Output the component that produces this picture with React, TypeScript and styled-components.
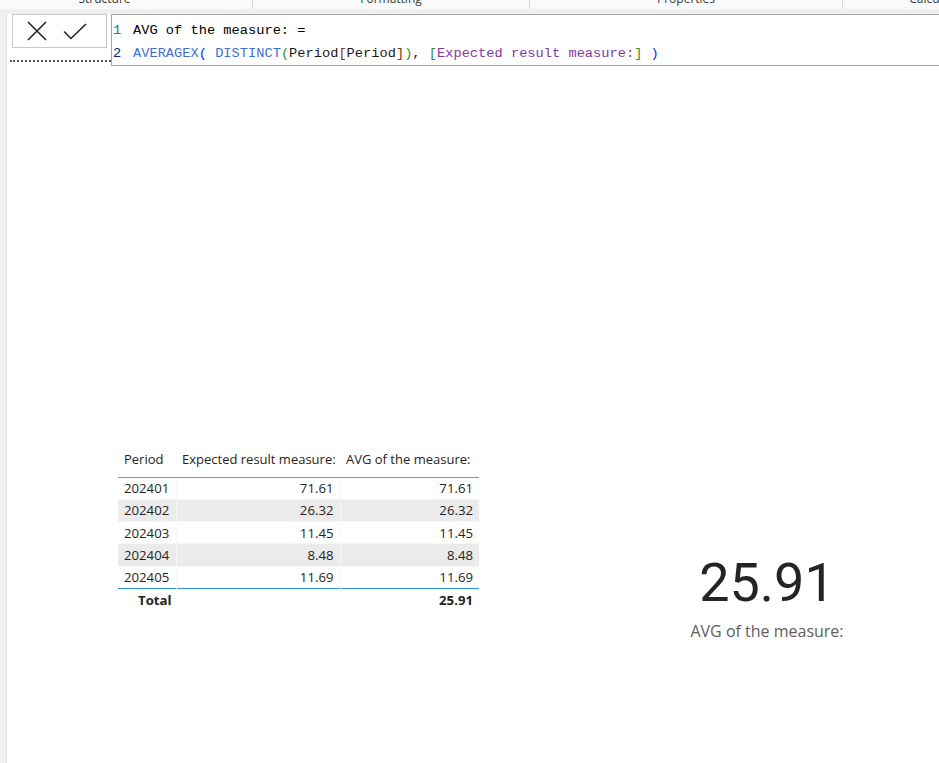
import styled, { createGlobalStyle } from "styled-components";

const GlobalStyle = createGlobalStyle`
  html, body {
    margin: 0;
    padding: 0;
    background: #ffffff;
  }
  body {
    font-family: "Open Sans", "Liberation Sans", sans-serif;
    color: #252423;
  }
`;

const Page = styled.div`
  width: 939px;
  height: 763px;
  overflow: hidden;
  display: flex;
  flex-direction: column;
  background: #ffffff;
`;

const TabBar = styled.div`
  height: 9px;
  background: #fafafa;
  display: flex;
  overflow: hidden;
  margin-left: -43px;
`;

const Tab = styled.div<{ $w: number; $last?: boolean }>`
  width: ${(p) => p.$w}px;
  flex: none;
  height: 9px;
  display: flex;
  justify-content: center;
  border-right: ${(p) => (p.$last ? "none" : "1px solid #d6d6d6")};
  box-sizing: border-box;
`;

const TabLabel = styled.span`
  font-size: 12px;
  line-height: 16px;
  margin-top: -9px;
  color: #3b3a39;
  white-space: nowrap;
`;

const Band = styled.div`
  height: 5px;
  background: #f0f0f0;
`;

const Body = styled.div`
  flex: 1;
  display: flex;
  min-height: 0;
`;

const LeftStrip = styled.div`
  width: 6px;
  flex: none;
  background: #f0f0f0;
  border-right: 1px solid #e4e4e4;
`;

const Main = styled.div`
  flex: 1;
  display: flex;
  flex-direction: column;
  min-width: 0;
`;

const FormulaRow = styled.div`
  display: flex;
  height: 52px;
`;

const Commit = styled.div`
  width: 104px;
  flex: none;
  display: flex;
  flex-direction: column;
`;

const ButtonBox = styled.div`
  margin-left: 5px;
  width: 95px;
  height: 34px;
  box-sizing: border-box;
  border: 1px solid #c8c8c8;
  display: flex;
  align-items: center;
  padding-left: 14px;
  gap: 16px;
`;

const Dotted = styled.div`
  margin-top: 12px;
  margin-left: 3px;
  height: 0;
  border-bottom: 2px dotted #555555;
`;

const FormulaBox = styled.div`
  flex: 1;
  box-sizing: border-box;
  border: 1px solid #a6a6a6;
  border-right: none;
  height: 52px;
  padding-top: 4px;
  font-family: "Liberation Mono", "DejaVu Sans Mono", monospace;
  font-size: 13.7px;
  white-space: pre;
  overflow: hidden;
`;

const CodeLine = styled.div`
  height: 23px;
  line-height: 23px;
  display: flex;
`;

const LineNo = styled.span<{ $active?: boolean }>`
  width: 20px;
  padding-left: 1px;
  flex: none;
  color: ${(p) => (p.$active ? "#0b216f" : "#237893")};
`;

const Tok = styled.span<{ $c: string }>`
  color: ${(p) => p.$c};
`;

const Canvas = styled.div`
  flex: 1;
  display: flex;
  align-items: flex-start;
  padding-top: 382px;
  padding-left: 111px;
`;

const TableVisual = styled.table`
  border-collapse: collapse;
  table-layout: fixed;
  width: 361px;
  font-size: 13.2px;
  color: #252423;
  flex: none;
`;

const HeadCell = styled.th<{ $w: number }>`
  width: ${(p) => p.$w}px;
  box-sizing: border-box;
  height: 29px;
  font-weight: 400;
  font-size: 13px;
  text-align: left;
  padding: 0 4px 6px 6px;
  white-space: nowrap;
  overflow: visible;
  border-bottom: 1px solid #4aa3e6;
`;

const Row = styled.tr<{ $alt?: boolean }>`
  background: ${(p) => (p.$alt ? "#ebebeb" : "#ffffff")};
`;

const Cell = styled.td<{ $num?: boolean; $last?: boolean }>`
  height: 22.3px;
  box-sizing: border-box;
  padding: 0 6px 0 6px;
  text-align: ${(p) => (p.$num ? "right" : "left")};
  border-bottom: ${(p) => (p.$last ? "none" : "1px solid #f7f7f7")};
  border-left: 1px solid #f7f7f7;
  &:first-child {
    border-left: none;
  }
`;

const TotalCell = styled.td<{ $num?: boolean }>`
  height: 23px;
  font-weight: 700;
  padding: 0 6px 0 ${(p) => (p.$num ? 6 : 20)}px;
  text-align: ${(p) => (p.$num ? "right" : "left")};
  border-top: 1px solid #2b98ef;
`;

const CardVisual = styled.div`
  margin-left: 188px;
  margin-top: 104px;
  width: 200px;
  display: flex;
  flex-direction: column;
  align-items: center;
`;

const BigValue = styled.div`
  font-family: Roboto, "Liberation Sans", sans-serif;
  font-size: 54px;
  line-height: 62px;
  color: #252423;
`;

const CardLabel = styled.div`
  margin-top: 6px;
  font-size: 16px;
  color: #605e5c;
  white-space: nowrap;
`;

const rows = [
  ["202401", "71.61", "71.61"],
  ["202402", "26.32", "26.32"],
  ["202403", "11.45", "11.45"],
  ["202404", "8.48", "8.48"],
  ["202405", "11.69", "11.69"],
];

const FN = "#3f6fd6";
const B1 = "#0431fa";
const B2 = "#319331";
const B3 = "#7b3814";
const TXT = "#1a1a1a";
const MEAS = "#8239a8";

export default function App() {
  return (
    <Page>
      <GlobalStyle />
      <TabBar>
        <Tab $w={296}>
          <TabLabel>Structure</TabLabel>
        </Tab>
        <Tab $w={277}>
          <TabLabel>Formatting</TabLabel>
        </Tab>
        <Tab $w={313}>
          <TabLabel>Properties</TabLabel>
        </Tab>
        <Tab $w={200} $last>
          <TabLabel>Calculations</TabLabel>
        </Tab>
      </TabBar>
      <Band />
      <Body>
        <LeftStrip />
        <Main>
          <FormulaRow>
            <Commit>
              <ButtonBox>
                <svg width="20" height="20" viewBox="0 0 20 20">
                  <path d="M1 1 L19 19 M19 1 L1 19" stroke="#252423" strokeWidth="1.6" fill="none" />
                </svg>
                <svg width="24" height="17" viewBox="0 0 24 17">
                  <path d="M1 8.5 L8 15.5 L23 1" stroke="#252423" strokeWidth="1.6" fill="none" />
                </svg>
              </ButtonBox>
              <Dotted />
            </Commit>
            <FormulaBox>
              <CodeLine>
                <LineNo>1</LineNo>
                <Tok $c="#000000">AVG of the measure: =</Tok>
              </CodeLine>
              <CodeLine>
                <LineNo $active>2</LineNo>
                <Tok $c={FN}>AVERAGEX</Tok>
                <Tok $c={B1}>(</Tok>
                <Tok $c={TXT}> </Tok>
                <Tok $c={FN}>DISTINCT</Tok>
                <Tok $c={B2}>(</Tok>
                <Tok $c={TXT}>Period</Tok>
                <Tok $c={B3}>[</Tok>
                <Tok $c={TXT}>Period</Tok>
                <Tok $c={B3}>]</Tok>
                <Tok $c={B2}>)</Tok>
                <Tok $c={TXT}>, </Tok>
                <Tok $c={B2}>[</Tok>
                <Tok $c={MEAS}>Expected result measure:</Tok>
                <Tok $c={B2}>]</Tok>
                <Tok $c={TXT}> </Tok>
                <Tok $c={B1}>)</Tok>
              </CodeLine>
            </FormulaBox>
          </FormulaRow>
          <Canvas>
            <TableVisual>
              <thead>
                <tr>
                  <HeadCell $w={58}>Period</HeadCell>
                  <HeadCell $w={164}>Expected result measure:</HeadCell>
                  <HeadCell $w={139}>AVG of the measure:</HeadCell>
                </tr>
              </thead>
              <tbody>
                {rows.map((r, i) => (
                  <Row key={r[0]} $alt={i % 2 === 1}>
                    <Cell $last={i === rows.length - 1}>{r[0]}</Cell>
                    <Cell $num $last={i === rows.length - 1}>{r[1]}</Cell>
                    <Cell $num $last={i === rows.length - 1}>{r[2]}</Cell>
                  </Row>
                ))}
                <tr>
                  <TotalCell>Total</TotalCell>
                  <TotalCell $num></TotalCell>
                  <TotalCell $num>25.91</TotalCell>
                </tr>
              </tbody>
            </TableVisual>
            <CardVisual>
              <BigValue>25.91</BigValue>
              <CardLabel>AVG of the measure:</CardLabel>
            </CardVisual>
          </Canvas>
        </Main>
      </Body>
    </Page>
  );
}
